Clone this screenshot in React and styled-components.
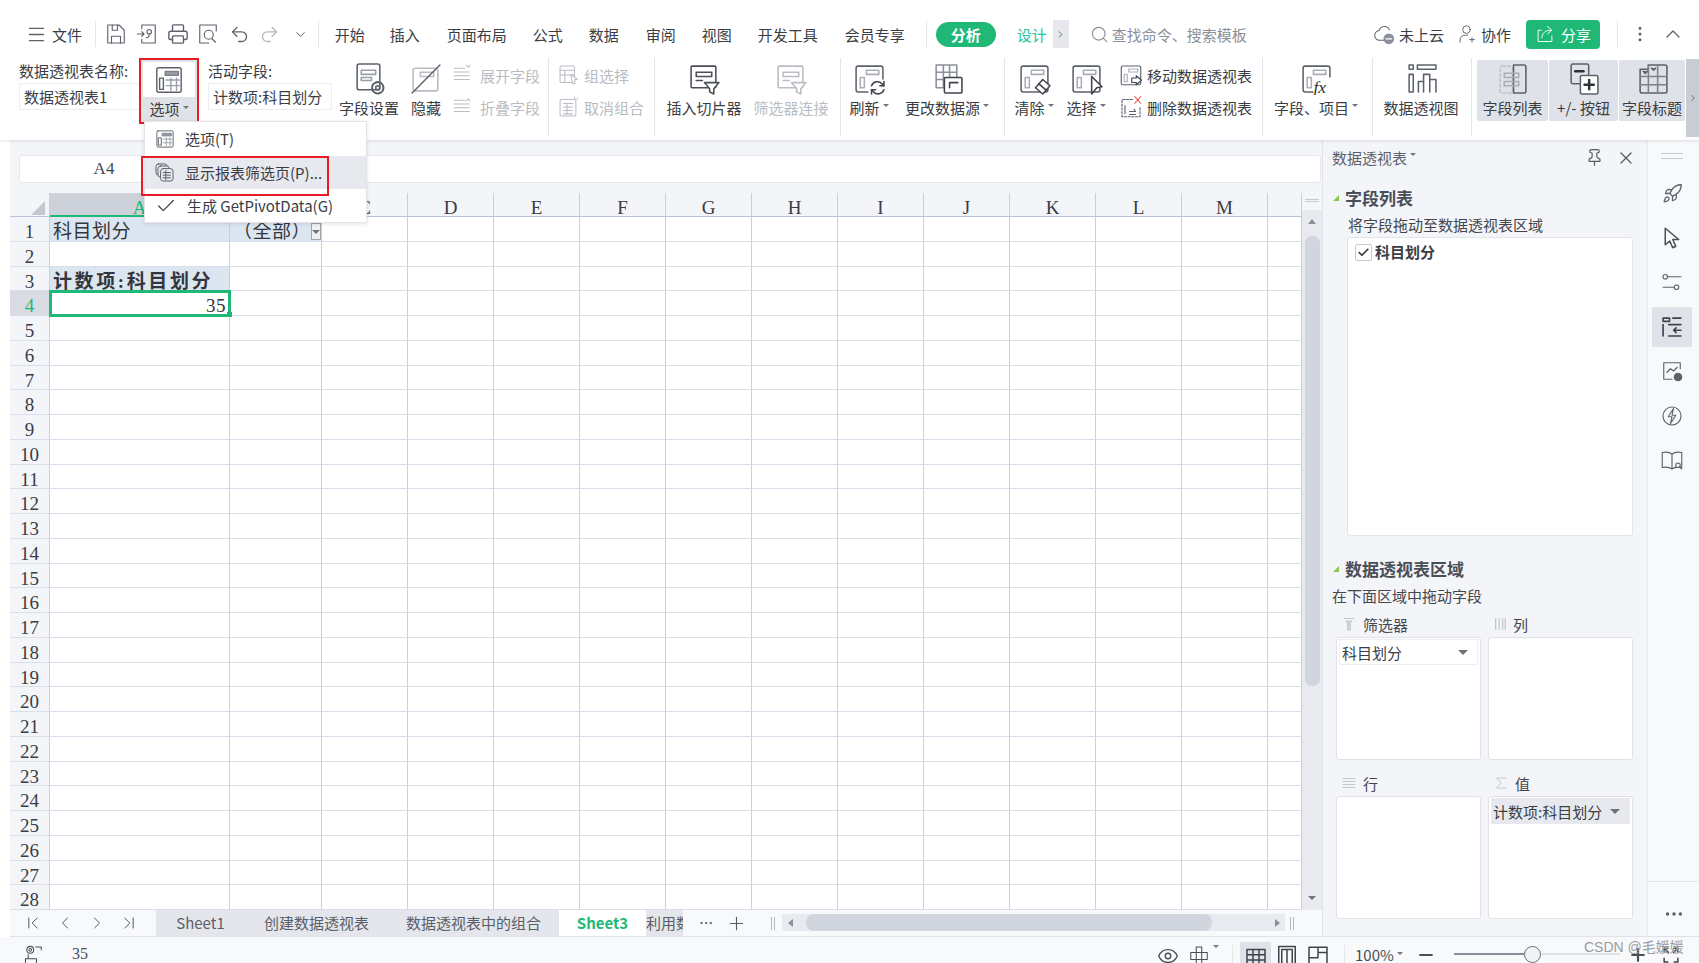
import React from "react";
import styled, { createGlobalStyle } from "styled-components";
import {
  Menu as MenuIcon, Printer, Undo2, Redo2, ChevronDown, ChevronUp, ChevronRight, ChevronLeft,
  ChevronFirst, ChevronLast, Search, Pin, X, Rocket, Eye, MoreVertical, Plus, Minus, Check, MoreHorizontal,
} from "lucide-react";

const UI = `"Noto Sans CJK SC", "Noto Sans", sans-serif`;
const SHEET = `"Liberation Serif", "Noto Sans CJK SC", serif`;
const INK = "#5c616b";
const MUTE = "#b9bcc2";

const Global = createGlobalStyle`
  html, body { margin: 0; padding: 0; background: #fff; overflow: hidden; }
  * { box-sizing: border-box; }
  body { font-family: ${UI}; font-size: 15px; color: #3a3d44; }
`;

const Page = styled.div`
  position: relative;
  width: 1699px;
  height: 963px;
  overflow: hidden;
  display: flex;
  flex-direction: column;
`;

/* ribbon */
const Ribbon = styled.header`
  height: 140px;
  flex: none;
  padding-top: 19px;
  background: #fff;
  position: relative;
  z-index: 2;
  box-shadow: 0 1px 3px rgba(40, 50, 70, 0.14);
`;
const TabRow = styled.div`
  height: 30px;
  display: flex;
  align-items: center;
  padding-left: 26px;
`;
const FileBtn = styled.div`
  width: 62px;
  display: flex;
  align-items: center;
  gap: 5px;
`;
const VLine = styled.div`
  width: 1px;
  height: ${(p) => p.$h || 26}px;
  background: #e4e6ea;
  flex: none;
  margin-left: ${(p) => p.$ml || 0}px;
  margin-right: ${(p) => p.$mr || 0}px;
`;
const Quick = styled.div`
  width: 30.7px;
  display: flex;
  justify-content: center;
  color: ${(p) => p.$c || INK};
`;
const TabLabel = styled.div`
  width: ${(p) => p.$w}px;
  text-align: center;
  white-space: nowrap;
  color: #3a3d44;
`;
const Pill = styled.div`
  width: 60px;
  height: 25px;
  margin-left: 9px;
  border-radius: 13px;
  background: #1fb877;
  color: #fff;
  font-weight: 700;
  text-align: center;
  line-height: 25px;
`;
const Design = styled.div`
  margin-left: 21px;
  width: 36px;
  color: #2cc49a;
`;
const MoreTabs = styled.div`
  width: 16px;
  height: 28px;
  background: #e6e8ed;
  display: flex;
  align-items: center;
  justify-content: center;
  color: ${INK};
`;
const SearchBox = styled.div`
  margin-left: 21px;
  display: flex;
  align-items: center;
  gap: 3px;
  color: #8b909a;
  white-space: nowrap;
`;
const RightTools = styled.div`
  margin-left: auto;
  display: flex;
  align-items: center;
  padding-right: 14px;
`;
const ToolText = styled.div`
  display: flex;
  align-items: center;
  gap: 4px;
  margin-right: ${(p) => p.$mr}px;
  white-space: nowrap;
`;
const ShareBtn = styled.div`
  width: 74px;
  height: 29px;
  border-radius: 4px;
  background: #1fb877;
  color: #fff;
  display: flex;
  align-items: center;
  justify-content: center;
  gap: 6px;
`;
const ChevronSlot = styled.div`
  margin-left: 11px;
  display: flex;
`;

const Commands = styled.div`
  margin-top: 9px;
  padding-left: 19px;
  display: flex;
  align-items: flex-start;
`;
const FieldCol = styled.div`
  width: ${(p) => p.$w}px;
  margin-left: ${(p) => p.$ml || 0}px;
  flex: none;
`;
const FieldLabel = styled.div`
  height: 25px;
  line-height: 26px;
  white-space: nowrap;
`;
const FieldInput = styled.div`
  height: 27px;
  line-height: 25px;
  padding-left: 4px;
  border: 1px solid #eceef1;
  white-space: nowrap;
  overflow: hidden;
`;
const OptionBtn = styled.div`
  width: 60px;
  height: 66px;
  margin-left: -2px;
  flex: none;
  border: 2px solid #e81c24;
  background: #dfe2e7;
  padding: 2px 2px 0;
  display: flex;
  flex-direction: column;
  align-items: center;
`;
const OptionTop = styled.div`
  width: 100%;
  height: 35px;
  background: #fff;
  display: flex;
  align-items: center;
  justify-content: center;
`;
const OptionText = styled.div`
  height: 24px;
  line-height: 24px;
  white-space: nowrap;
`;
const Big = styled.div`
  width: ${(p) => p.$w}px;
  flex: none;
  display: flex;
  flex-direction: column;
  align-items: center;
  color: ${(p) => (p.$off ? MUTE : "#3a3d44")};
  white-space: nowrap;
`;
const BigIcon = styled.div`
  height: 40px;
  display: flex;
  align-items: center;
  justify-content: center;
`;
const BigText = styled.div`
  height: 20px;
  line-height: 20px;
  display: flex;
  align-items: center;
`;
const Toggle = styled(Big)`
  height: 61px;
  margin-top: 2px;
  margin-right: 1px;
  background: #dfe2e8;
  border-radius: 2px;
  overflow: hidden;
  & > ${BigIcon} { height: 36px; }
  & > ${BigText} { margin-top: 2px; }
`;
const Caret = styled.span`
  display: inline-block;
  width: 0;
  height: 0;
  margin-left: 3px;
  margin-bottom: 6px;
  border-left: 3px solid transparent;
  border-right: 3px solid transparent;
  border-top: 3px solid #70757f;
`;
const Stack = styled.div`
  width: ${(p) => p.$w}px;
  padding-left: ${(p) => p.$pl}px;
  flex: none;
`;
const StackRow = styled.div`
  height: 32px;
  margin-top: ${(p) => (p.$first ? 1 : 0)}px;
  display: flex;
  align-items: center;
  gap: 4px;
  white-space: nowrap;
  color: ${(p) => (p.$off ? MUTE : "#3a3d44")};
`;
const RibbonSep = styled(VLine)`
  height: 78px;
`;
const Strip = styled.div`
  width: 14px;
  height: 78px;
  margin-top: 1px;
  flex: none;
  background: #c9ccd3;
  display: flex;
  align-items: center;
  justify-content: center;
  color: ${INK};
`;

/* dropdown */
const DropMenu = styled.div`
  position: absolute;
  left: 144px;
  top: 121px;
  width: 223px;
  height: 102px;
  z-index: 5;
  background: #fff;
  border: 1px solid #e2e4e8;
  box-shadow: 0 1px 4px rgba(0, 0, 0, 0.12);
`;
const DropItem = styled.div`
  position: relative;
  height: 33.5px;
  padding-left: ${(p) => (p.$hot ? 9 : 10)}px;
  display: flex;
  align-items: center;
  gap: 10px;
  white-space: nowrap;
  font-size: 15px;
  background: ${(p) => (p.$hot ? "#e7e9ee" : "transparent")};
  ${(p) => p.$hot && `
    &::after {
      content: "";
      position: absolute;
      left: -4px;
      top: 0;
      width: 184px;
      height: 36px;
      border: 2px solid #e81c24;
    }
  `}
`;

/* main */
const Main = styled.main`
  flex: 1;
  min-height: 0;
  display: flex;
  padding-left: 10px;
`;
const SheetArea = styled.section`
  width: 1312px;
  flex: none;
  display: flex;
  flex-direction: column;
  background: #f4f5f8;
`;
const FormulaBar = styled.div`
  height: 53px;
  flex: none;
  padding: 15px 1px 10px 9px;
`;
const FormulaInput = styled.div`
  height: 28px;
  background: #fff;
  border: 1px solid #e8e9ed;
  border-radius: 3px;
`;
const NameBox = styled.div`
  width: 168px;
  height: 26px;
  line-height: 26px;
  text-align: center;
  font-family: ${SHEET};
  font-size: 17px;
  color: #44474e;
`;
const GridWrap = styled.div`
  height: 717px;
  flex: none;
  display: flex;
`;
const Grid = styled.div`
  width: 1292px;
  height: 717px;
  overflow: hidden;
  display: grid;
  grid-template-columns: 40px 180px 92px repeat(11, 86px) 34px;
  grid-template-rows: 24px;
  grid-auto-rows: 24.75px;
  font-family: ${SHEET};
  font-size: 19px;
  color: #33363c;
`;
const Corner = styled.div`
  border-right: 1px solid #c7d0e0;
  border-bottom: 1px solid #b9c3d6;
  display: flex;
  align-items: flex-end;
  justify-content: flex-end;
  padding: 0 4px 1px 0;
`;
const CornerMark = styled.span`
  width: 0;
  height: 0;
  border-bottom: 14px solid #c4c8d0;
  border-left: 14px solid transparent;
`;
const ColHead = styled.div`
  text-align: center;
  line-height: 24px;
  padding-top: 3px;
  color: ${(p) => (p.$active ? "#1fb877" : "#3a3d44")};
  background: ${(p) => (p.$active ? "#cdd1d9" : "transparent")};
  border-right: 1px solid ${(p) => (p.$active ? "#cdd1d9" : "#c7d0e0")};
  border-bottom: ${(p) => (p.$active ? "2px solid #1fb877" : "1px solid #b9c3d6")};
`;
const RowHead = styled.div`
  text-align: center;
  line-height: 24px;
  padding-top: 3px;
  color: ${(p) => (p.$active ? "#1fb877" : "#3a3d44")};
  background: ${(p) => (p.$active ? "#d8dbe1" : "transparent")};
  border-right: 1px solid #c7d0e0;
  border-bottom: 1px solid #d9dfea;
`;
const Cell = styled.div`
  position: relative;
  background: ${(p) => (p.$fill ? "#dce6f1" : "#fff")};
  border-right: 1px solid #c7d0e0;
  border-bottom: 1px solid #d9dfea;
  line-height: 24px;
  padding: 3px 3px 0;
  white-space: nowrap;
  display: flex;
  justify-content: space-between;
  letter-spacing: ${(p) => (p.$bold ? 2.6 : 0.5)}px;
  font-weight: ${(p) => (p.$bold ? 700 : 400)};
`;
const SelCell = styled(Cell)`
  justify-content: flex-end;
  outline: 3px solid #1fb877;
  outline-offset: -2px;
  z-index: 1;
  &::after {
    content: "";
    position: absolute;
    right: -3px;
    bottom: -2px;
    width: 5px;
    height: 5px;
    background: #1fb877;
  }
`;
const FilterBtn = styled.span`
  width: 18px;
  height: 17px;
  margin: 3px -2px 0 0;
  background: #eef0f3;
  border: 1px solid #9fa3ab;
  display: flex;
  align-items: center;
  justify-content: center;
`;
const DownTri = styled.span`
  display: block;
  width: 0;
  height: 0;
  border-left: ${(p) => p.$s || 4}px solid transparent;
  border-right: ${(p) => p.$s || 4}px solid transparent;
  border-top: ${(p) => p.$s || 4}px solid #6e727b;
`;
const VScroll = styled.div`
  width: 20px;
  flex: none;
  display: flex;
  flex-direction: column;
`;
const Grip = styled.div`
  height: 17px;
  flex: none;
  padding: 6px 3px 0;
  & > div { height: 3px; border-top: 1px solid #c4c8d0; border-bottom: 1px solid #c4c8d0; }
`;
const VTrack = styled.div`
  flex: 1;
  background: #e8eaef;
  display: flex;
  flex-direction: column;
  align-items: center;
  padding-top: 9px;
`;
const UpTri = styled.span`
  display: block;
  width: 0;
  height: 0;
  border-left: 4px solid transparent;
  border-right: 4px solid transparent;
  border-bottom: 5px solid #8a8f99;
`;
const VThumb = styled.div`
  width: 15px;
  height: 450px;
  margin: 12px 0 0 1px;
  border-radius: 7px;
  background: #d1d5dd;
`;
const VDown = styled.div`
  margin-top: auto;
  padding-bottom: 10px;
  display: flex;
`;
const TabBar = styled.div`
  height: 27px;
  flex: none;
  display: flex;
  background: #f8f9fb;
  border-bottom: 1px solid #dfe1e6;
`;
const SheetNav = styled.div`
  width: 146px;
  flex: none;
  padding-left: 13px;
  display: flex;
  align-items: center;
  gap: 12px;
  color: #555a63;
`;
const SheetTab = styled.div`
  width: ${(p) => p.$w}px;
  flex: none;
  height: 26px;
  line-height: 25px;
  text-align: ${(p) => (p.$clip ? "left" : "center")};
  overflow: hidden;
  white-space: nowrap;
  background: ${(p) => (p.$on ? "#fff" : "#e4e6ec")};
  color: ${(p) => (p.$on ? "#1fb877" : "#5a5e67")};
  font-weight: ${(p) => (p.$on ? 700 : 400)};
`;
const TabTools = styled.div`
  width: 88px;
  flex: none;
  display: flex;
  align-items: center;
  padding-left: 15px;
  gap: 12px;
  color: #555a63;
`;
const Bars = styled.div`
  width: 4px;
  height: 13px;
  flex: none;
  margin-top: 7px;
  border-left: 1px solid #b4b8c0;
  border-right: 1px solid #b4b8c0;
`;
const HTrack = styled.div`
  width: 503px;
  height: 17px;
  margin: 4px 5px 0 7px;
  flex: none;
  background: #e8eaef;
  display: flex;
  align-items: center;
  padding: 0 5px 0 6px;
`;
const HThumb = styled.div`
  width: 406px;
  height: 17px;
  margin: 0 auto 0 13px;
  border-radius: 8px;
  background: #d1d5dd;
`;
const SideTri = styled.span`
  display: block;
  width: 0;
  height: 0;
  border-top: 4px solid transparent;
  border-bottom: 4px solid transparent;
  ${(p) => (p.$left ? "border-right" : "border-left")}: 5px solid #8a8f99;
`;

/* right panel */
const Panel = styled.aside`
  width: 325px;
  flex: none;
  background: #f4f5f8;
  border-left: 1px solid #e2e4e9;
  border-bottom: 1px solid #dfe1e6;
  padding-top: 7px;
`;
const PanelHead = styled.div`
  height: 21px;
  line-height: 21px;
  padding: 0 11px 0 9px;
  display: flex;
  align-items: center;
  color: ${INK};
`;
const HeadIcons = styled.div`
  margin-left: auto;
  display: flex;
  gap: 12px;
  color: #555a63;
`;
const SecTitle = styled.div`
  margin-top: ${(p) => p.$mt}px;
  padding-left: 10px;
  height: 24px;
  line-height: 24px;
  display: flex;
  align-items: center;
  gap: 6px;
  font-size: 17px;
  font-weight: 700;
  color: #4a4e57;
  &::before {
    content: "";
    width: 0;
    height: 0;
    border-bottom: 6px solid #8bc751;
    border-left: 6px solid transparent;
  }
`;
const SecDesc = styled.div`
  height: 20px;
  margin-top: ${(p) => p.$mt || 5}px;
  line-height: 20px;
  padding-left: ${(p) => p.$pl}px;
  color: #44474e;
`;
const FieldList = styled.div`
  width: 286px;
  height: 299px;
  margin: 2px 0 0 24px;
  background: #fff;
  border: 1px solid #e2e4e9;
  border-radius: 3px;
  padding: 3px 7px;
  display: flex;
  align-items: flex-start;
  gap: 3px;
  font-weight: 700;
`;
const CheckBox = styled.span`
  width: 17px;
  height: 17px;
  margin-top: 3px;
  flex: none;
  background: #fff;
  border: 1px solid #c6c9d0;
  border-radius: 2px;
  display: flex;
  align-items: center;
  justify-content: center;
  color: #2f3238;
`;
const Areas = styled.div`
  padding: 8px 14px 0 13px;
  display: grid;
  grid-template-columns: 145px 145px;
  grid-template-rows: 20px 126px 33px 126px;
  column-gap: 7px;
`;
const AreaLabel = styled.div`
  padding: ${(p) => (p.$low ? 13 : 0)}px 0 0 5px;
  display: flex;
  align-items: center;
  gap: 6px;
  color: #44474e;
`;
const AreaBox = styled.div`
  margin-top: 3px;
  background: #fff;
  border: 1px solid #e0e2e7;
  border-radius: 3px;
  padding: 1px 2px;
`;
const AreaItem = styled.div`
  height: 26px;
  padding: 0 9px 0 ${(p) => (p.$on ? 1 : 2)}px;
  display: flex;
  align-items: center;
  justify-content: space-between;
  white-space: nowrap;
  background: ${(p) => (p.$on ? "#e7e9ee" : "#fff")};
  border: 1px solid ${(p) => (p.$on ? "#e7e9ee" : "#eceef1")};
`;

/* side rail */
const Rail = styled.nav`
  flex: 1;
  background: #f8f9fb;
  border-left: 1px solid #e8eaee;
  border-bottom: 1px solid #dfe1e6;
  padding-right: 3px;
  display: flex;
  flex-direction: column;
  align-items: center;
  color: #5c616b;
`;
const RailGrip = styled.div`
  width: 22px;
  height: 6px;
  margin: 13px 0 14px;
  border-top: 1px solid #c8cbd2;
  border-bottom: 1px solid #c8cbd2;
`;
const RailBtn = styled.div`
  width: 40px;
  height: 40px;
  margin-bottom: 4.5px;
  display: flex;
  align-items: center;
  justify-content: center;
  border-radius: 2px;
  background: ${(p) => (p.$on ? "#dfe2e8" : "transparent")};
`;
const RailFoot = styled.div`
  margin-top: auto;
  margin-right: -3px;
  align-self: stretch;
  height: 55px;
  border-top: 1px solid #e4e6ea;
  display: flex;
  align-items: flex-start;
  justify-content: center;
  padding-top: 21px;
`;

/* status bar */
const Status = styled.footer`
  height: 26px;
  flex: none;
  display: flex;
  align-items: flex-start;
  padding-top: 8px;
  background: #f8f9fb;
  color: #4a4e57;
  font-family: ${SHEET};
  font-size: 16px;
`;
const StatusLeft = styled.div`
  width: 72px;
  padding-left: 22px;
  flex: none;
  display: flex;
  justify-content: space-between;
`;
const StatusRight = styled.div`
  margin-left: auto;
  width: 546px;
  display: flex;
  align-items: flex-start;
`;
const SCell = styled.div`
  width: ${(p) => p.$w}px;
  height: 34px;
  margin-top: ${(p) => (p.$on ? -3 : 0)}px;
  padding-top: ${(p) => (p.$on ? 3 : 0)}px;
  flex: none;
  display: flex;
  justify-content: center;
  background: ${(p) => (p.$on ? "#dfe2e8" : "transparent")};
  color: #4a4e57;
`;
const Zoom = styled.div`
  width: 46px;
  font-family: ${UI};
  font-size: 15px;
  line-height: 20px;
  white-space: nowrap;
`;
const Slider = styled.div`
  width: 166px;
  height: 18px;
  margin-left: 3px;
  flex: none;
  display: flex;
  align-items: center;
`;
const Seg = styled.div`
  height: 2px;
  flex: ${(p) => (p.$on ? "0 0 70px" : "1")};
  background: ${(p) => (p.$on ? "#8a8f99" : "#dfe1e6")};
`;
const Knob = styled.div`
  width: 17px;
  height: 17px;
  flex: none;
  border-radius: 50%;
  background: #f1f2f4;
  border: 1.5px solid #6a6e77;
`;
const Watermark = styled.div`
  position: absolute;
  left: 1584px;
  top: 936px;
  z-index: 6;
  font-family: "Liberation Sans", "Noto Sans CJK SC", sans-serif;
  font-size: 14px;
  color: #9a9ca2;
  white-space: nowrap;
`;

/* drawings */
const Svg = ({ s = 32, c = INK, w = 1.5, children }) => (
  <svg width={s} height={s} viewBox="0 0 32 32" fill="none" stroke={c} strokeWidth={w} strokeLinejoin="round" strokeLinecap="round">
    {children}
  </svg>
);
const Pivot = ({ c = INK, light = "#a9adb5" }) => (
  <>
    <rect x="3" y="4" width="26" height="25" rx="2" stroke={c} />
    <rect x="13" y="8" width="12" height="4" stroke={light} />
    <rect x="7" y="15" width="4" height="10" stroke={light} />
  </>
);
const OptionIcon = ({ s }) => (
  <Svg s={s}>
    <rect x="3" y="3" width="26" height="26" rx="2" />
    <rect x="12" y="7" width="14" height="4" fill="#9aa0aa" stroke="#7c818b" />
    <rect x="6" y="14" width="4" height="12" />
    <path d="M13 16h14M13 22h14M18 14v13M24 14v13" stroke="#9aa0aa" />
  </Svg>
);
const GearIcon = () => (
  <Svg s={33}>
    <rect x="4" y="2" width="22" height="25" rx="2" />
    <path d="M8 8h14v4H8zM8 15h10v3H8z" stroke="#9aa0aa" />
    <circle cx="24" cy="25" r="2" />
    <circle cx="24" cy="25" r="5.500" strokeDasharray="3 1.5" strokeWidth="2" />
  </Svg>
);
const HideIcon = () => (
  <Svg s={33} c={MUTE}>
    <rect x="3" y="6" width="24" height="22" rx="2" />
    <path d="M10 10h13v4H10z" />
    <path d="M2 30 29 3" stroke="#5c616b" strokeWidth="1.4" />
  </Svg>
);
const ExpandIcon = ({ up }) => (
  <Svg s={24} c={MUTE}>
    <path d="M3 7h14M3 12h20M3 17h20M3 22h20" />
    <path d={up ? "M19 8l2.500-3 2.500 3" : "M19 3l2.500 3 2.500-3"} />
  </Svg>
);
const GroupIcon = () => (
  <Svg s={22} c={MUTE}>
    <rect x="3" y="3" width="21" height="24" rx="2" />
    <path d="M3 9h21M3 16h21M10 9v18" />
    <path d="M19 15l9 7-4 1 1 5-3 1-2-5z" fill="#fff" />
  </Svg>
);
const UngroupIcon = () => (
  <Svg s={22} c={MUTE}>
    <rect x="3" y="5" width="23" height="24" rx="2" />
    <path d="M8 11h13M8 16h13M8 21h13M8 26h13M13 11v15" />
    <path d="M24 2v2M28 3v2" />
  </Svg>
);
const SlicerIcon = ({ c = "#4a4e57" }) => (
  <Svg s={33} c={c}>
    <rect x="3" y="4" width="24" height="21" rx="1" />
    <path d="M8 10h15v4H8zM8 18h6" />
    <path d="M16 20h14l-5 6v5l-4-2v-3z" fill="#fff" />
  </Svg>
);
const RefreshIcon = () => (
  <Svg s={33}>
    <Pivot />
    <rect x="15" y="17" width="17" height="15" fill="#fff" stroke="none" />
    <path d="M18 23a6 6 0 0 1 10-2l2 2M30 27a6 6 0 0 1-10 2l-2-2" stroke="#3f434b" />
    <path d="M30 19v4h-4M18 31v-4h4" stroke="#3f434b" />
  </Svg>
);
const SourceIcon = () => (
  <Svg s={33}>
    <path d="M5 3h20v22H5zM5 10h20M5 17h20M12 3v22M18 3v22" stroke="#8b909a" />
    <rect x="13" y="15" width="17" height="15" rx="1" fill="#fff" stroke="#3f434b" />
    <path d="M18 25v-5h8" stroke="#3f434b" />
  </Svg>
);
const ClearIcon = () => (
  <Svg s={33}>
    <Pivot />
    <path d="M24 17l7 6-7 8-7-6z" fill="#fff" stroke="#3f434b" />
    <path d="M20 21l7 6" stroke="#3f434b" />
  </Svg>
);
const SelectIcon = () => (
  <Svg s={33}>
    <Pivot />
    <path d="M21 14l10 10-5 1-5 6z" fill="#fff" stroke="#3f434b" />
  </Svg>
);
const MoveIcon = () => (
  <Svg s={24}>
    <Pivot />
    <path d="M17 20h6v-3l7 6-7 6v-3h-6z" fill="#fff" stroke="#3f434b" />
  </Svg>
);
const DeleteIcon = () => (
  <Svg s={24}>
    <path d="M18 6H4v23h24V17" strokeDasharray="3 2" />
    <path d="M8 14v11M14 22h8l-2-3M22 26h-8" />
    <path d="M21 2l8 9M29 2l-8 9" stroke="#e5534b" />
  </Svg>
);
const FxIcon = () => (
  <Svg s={33}>
    <Pivot />
    <rect x="13" y="15" width="19" height="17" fill="#fff" stroke="none" />
    <text x="13" y="30" fontFamily="Liberation Serif" fontStyle="italic" fontSize="17" fill="#2f3238" stroke="none">fx</text>
  </Svg>
);
const ChartIcon = () => (
  <Svg s={33}>
    <rect x="4" y="3" width="4" height="4" />
    <rect x="12" y="3" width="18" height="4" />
    <rect x="4" y="12" width="4" height="17" />
    <path d="M13 29V19h5v10M18 29V12h6v17M24 29V17h6v12" />
  </Svg>
);
const FieldListIcon = () => (
  <Svg s={33}>
    <rect x="4" y="4" width="12" height="26" rx="2" stroke="#c0c3c9" strokeDasharray="3 2" />
    <path d="M17 3h10a2 2 0 0 1 2 2v23a2 2 0 0 1-2 2H17z" />
    <path d="M8 11h14v4H8zM8 19h14v4H8z" stroke="#a9adb5" />
  </Svg>
);
const PlusMinusIcon = () => (
  <Svg s={33}>
    <rect x="4" y="2" width="17" height="19" rx="1.5" />
    <path d="M8 9h8" strokeWidth="2.4" stroke="#2f3238" />
    <rect x="13" y="13" width="17" height="18" rx="1.5" fill="#fff" />
    <path d="M17 22h9M21.500 17.500v9" strokeWidth="2.4" stroke="#2f3238" />
  </Svg>
);
const HeaderIcon = () => (
  <Svg s={33}>
    <path d="M4 7h8v-4h16a2 2 0 0 1 2 2v23a2 2 0 0 1-2 2H6a2 2 0 0 1-2-2z" />
    <path d="M4 14h26M4 22h26M12 3v27M21 3v27" stroke="#7c818b" />
    <path d="M7 9l2 2 2-2M15 6l2 2 2-2" fill="#3f434b" />
  </Svg>
);
const SaveIcon = () => (
  <Svg s={24}>
    <path d="M5 4h15l7 7v17H5z" />
    <path d="M11 4v7h7V4M10 28v-9h12v9" />
  </Svg>
);
const OutputIcon = () => (
  <Svg s={24}>
    <path d="M9 9V4h18v24H9v-5" />
    <path d="M3 16h9l-3-3M12 16l-3 3" />
    <circle cx="19" cy="13" r="3" />
    <path d="M19 16c0 4-2 5-4 5" />
  </Svg>
);
const PreviewIcon = () => (
  <Svg s={24}>
    <path d="M27 12V4H5v24h12" />
    <circle cx="17" cy="17" r="6" />
    <path d="M21 22l5 5" />
  </Svg>
);
const CloudIcon = () => (
  <Svg s={22}>
    <path d="M18 25H10a7 7 0 0 1-1-14 8 8 0 0 1 15-1" />
    <circle cx="23" cy="23" r="7" fill="#8b909a" stroke="#8b909a" />
    <path d="M19 23h8" stroke="#fff" strokeWidth="2" />
  </Svg>
);
const PeopleIcon = () => (
  <Svg s={20}>
    <circle cx="15" cy="9" r="6" />
    <path d="M5 29v-5a8 8 0 0 1 8-6h4M24 22v7M20 25h8" />
  </Svg>
);
const ShareIcon = () => (
  <Svg s={20} c="#fff">
    <path d="M10 10H5v18h22v-9" />
    <path d="M11 22c0-8 6-12 14-12M20 4l7 6-7 6" />
  </Svg>
);
const FilterSmall = () => (
  <Svg s={16} c="#c4c7cd" w={2}>
    <path d="M6 5h20M10 10h12l-3 4v14h-6V14z" fill="#d4d6db" />
  </Svg>
);
const ColsSmall = () => (
  <Svg s={14} c="#c4c7cd" w={3}>
    <path d="M6 4v24M14 4v24M22 4v24M28 4v24" />
  </Svg>
);
const RowsSmall = () => (
  <Svg s={16} c="#c4c7cd" w={2.4}>
    <path d="M4 7h24M4 13h24M4 19h24M4 25h24" />
  </Svg>
);
const SumSmall = () => (
  <Svg s={16} c="#c4c7cd" w={2}>
    <path d="M26 6H7l9 10-9 10h19" />
  </Svg>
);
const MenuShow = () => (
  <Svg s={21}>
    <rect x="3" y="3" width="17" height="17" rx="4" />
    <rect x="6" y="6" width="17" height="17" rx="4" fill="#e7e9ee" />
    <rect x="10" y="10" width="19" height="19" rx="4" fill="#e7e9ee" />
    <path d="M14 16h11M14 20h11M14 24h11M18 13v14" />
  </Svg>
);
const RailCursor = () => (
  <Svg s={24} c="#4a4e57" w={2}>
    <path d="M7 3v22l6-5 4 9 4-2-4-9h8z" />
  </Svg>
);
const RailSliders = () => (
  <Svg s={24}>
    <circle cx="7" cy="9" r="3" />
    <path d="M10 9h18M4 23h14" />
    <circle cx="22" cy="23" r="3" />
  </Svg>
);
const RailPivot = () => (
  <Svg s={26} c="#3f434b" w={2}>
    <path d="M5 5h8v4H5zM17 5h10M5 13v14M12 13h15" />
    <path d="M27 20h-9l3-3M18 20l3 3M12 27h15" />
  </Svg>
);
const RailChart = () => (
  <Svg s={24}>
    <path d="M27 13V5H5v22h11" />
    <path d="M9 18l5-5 4 3 5-5" />
    <circle cx="24" cy="24" r="5" fill="#5c616b" />
  </Svg>
);
const RailBolt = () => (
  <Svg s={24}>
    <circle cx="16" cy="16" r="12" />
    <path d="M18 6l-7 11h5l-2 9 7-11h-5z" />
  </Svg>
);
const RailBook = () => (
  <Svg s={24}>
    <path d="M16 8C12 5 8 5 3 6v20c5-1 9-1 13 2 4-3 8-3 13-2V6c-5-1-9-1-13 2zM16 8v20" />
    <circle cx="24" cy="23" r="3" fill="#f8f9fb" />
    <path d="M26 25l3 3" />
  </Svg>
);
const Lens = () => (
  <Svg s={22} c="#4a4e57">
    <path d="M12 3v8H4v10h8v8h8v-8h8V11h-8V3z" />
    <path d="M12 11v10M20 11v10M12 21h8M12 11h8" />
  </Svg>
);
const ViewGrid = () => (
  <Svg s={24} c="#3f434b" w={2}>
    <path d="M4 6h24v22H4zM4 13h24M4 20h24M12 6v22M20 6v22" />
  </Svg>
);
const ViewPage = () => (
  <Svg s={24} c="#3f434b" w={2}>
    <path d="M5 2h22v26H5zM9 6h14v22H9zM16 6v22" />
  </Svg>
);
const ViewBreak = () => (
  <Svg s={24} c="#3f434b" w={2}>
    <path d="M4 3h24v26H4zM4 17h12V3M16 10h12" />
  </Svg>
);
const TripodIcon = () => (
  <Svg s={22} c="#4a4e57">
    <circle cx="12" cy="7" r="5" />
    <circle cx="12" cy="7" r="2" />
    <path d="M20 3h8v4M5 20h16v8H5zM9 14v6" />
  </Svg>
);
const FullScreen = () => (
  <Svg s={20} c="#3f434b" w={2.4}>
    <path d="M5 11V5h6M27 11V5h-6M5 21v6h6M27 21v6h-6M5 5l7 7M27 5l-7 7" />
  </Svg>
);

const COLS = ["A", "B", "C", "D", "E", "F", "G", "H", "I", "J", "K", "L", "M", ""];
const ROWS = Array.from({ length: 28 }, (_, i) => i + 1);

const SheetCell = ({ row, col }) => {
  if (row === 1 && col === "A") return <Cell $fill>科目划分</Cell>;
  if (row === 1 && col === "B")
    return (
      <Cell $fill>
        （全部）
        <FilterBtn><DownTri /></FilterBtn>
      </Cell>
    );
  if (row === 3 && col === "A") return <Cell $fill $bold>计数项:科目划分</Cell>;
  if (row === 4 && col === "A") return <SelCell>35</SelCell>;
  return <Cell />;
};

const BigButton = ({ w, icon, label, caret, off }) => (
  <Big $w={w} $off={off}>
    <BigIcon>{icon}</BigIcon>
    <BigText>{label}{caret && <Caret />}</BigText>
  </Big>
);

const ToggleButton = ({ w, icon, label }) => (
  <Toggle $w={w}>
    <BigIcon>{icon}</BigIcon>
    <BigText>{label}</BigText>
  </Toggle>
);

export default function App() {
  return (
    <Page>
      <Global />
      <Ribbon>
        <TabRow>
          <FileBtn><MenuIcon size={21} strokeWidth={1.5} color={INK} />文件</FileBtn>
          <VLine $ml={7} $mr={5} />
          <Quick><SaveIcon /></Quick>
          <Quick><OutputIcon /></Quick>
          <Quick><Printer size={22} strokeWidth={1.5} /></Quick>
          <Quick><PreviewIcon /></Quick>
          <Quick><Undo2 size={21} strokeWidth={1.5} /></Quick>
          <Quick $c="#b5b8be"><Redo2 size={21} strokeWidth={1.5} /></Quick>
          <Quick><ChevronDown size={15} strokeWidth={1.6} /></Quick>
          <VLine $ml={2} $mr={3} />
          <TabLabel $w={56}>开始</TabLabel>
          <TabLabel $w={54}>插入</TabLabel>
          <TabLabel $w={90}>页面布局</TabLabel>
          <TabLabel $w={52}>公式</TabLabel>
          <TabLabel $w={60}>数据</TabLabel>
          <TabLabel $w={54}>审阅</TabLabel>
          <TabLabel $w={58}>视图</TabLabel>
          <TabLabel $w={84}>开发工具</TabLabel>
          <TabLabel $w={90}>会员专享</TabLabel>
          <VLine $ml={6} />
          <Pill>分析</Pill>
          <Design>设计</Design>
          <MoreTabs><ChevronRight size={11} strokeWidth={2} /></MoreTabs>
          <SearchBox><Search size={19} strokeWidth={1.5} />查找命令、搜索模板</SearchBox>
          <RightTools>
            <ToolText $mr={13}><CloudIcon />未上云</ToolText>
            <ToolText $mr={15}><PeopleIcon />协作</ToolText>
            <ShareBtn><ShareIcon />分享</ShareBtn>
            <VLine $ml={17} $mr={12} />
            <MoreVertical size={20} strokeWidth={1.6} color={INK} />
            <ChevronSlot><ChevronUp size={24} strokeWidth={1.3} color={INK} /></ChevronSlot>
          </RightTools>
        </TabRow>
        <Commands>
          <FieldCol $w={122}>
            <FieldLabel>数据透视表名称:</FieldLabel>
            <FieldInput>数据透视表1</FieldInput>
          </FieldCol>
          <OptionBtn>
            <OptionTop><OptionIcon s={30} /></OptionTop>
            <OptionText>选项<Caret /></OptionText>
          </OptionBtn>
          <FieldCol $w={124} $ml={9}>
            <FieldLabel>活动字段:</FieldLabel>
            <FieldInput>计数项:科目划分</FieldInput>
          </FieldCol>
          <BigButton w={74} icon={<GearIcon />} label="字段设置" />
          <BigButton w={40} icon={<HideIcon />} label="隐藏" />
          <Stack $w={102} $pl={6}>
            <StackRow $first $off><ExpandIcon />展开字段</StackRow>
            <StackRow $off><ExpandIcon up />折叠字段</StackRow>
          </Stack>
          <RibbonSep />
          <Stack $w={105} $pl={9}>
            <StackRow $first $off><GroupIcon />组选择</StackRow>
            <StackRow $off><UngroupIcon />取消组合</StackRow>
          </Stack>
          <RibbonSep />
          <BigButton w={98} icon={<SlicerIcon />} label="插入切片器" />
          <BigButton w={76} off icon={<SlicerIcon c={MUTE} />} label="筛选器连接" />
          <RibbonSep $ml={11} />
          <BigButton w={56} icon={<RefreshIcon />} label="刷新" caret />
          <BigButton w={100} icon={<SourceIcon />} label="更改数据源" caret />
          <RibbonSep $ml={7} />
          <BigButton w={58} icon={<ClearIcon />} label="清除" caret />
          <BigButton w={46} icon={<SelectIcon />} label="选择" caret />
          <Stack $w={153} $pl={10}>
            <StackRow $first><MoveIcon />移动数据透视表</StackRow>
            <StackRow><DeleteIcon />删除数据透视表</StackRow>
          </Stack>
          <RibbonSep />
          <BigButton w={106} icon={<FxIcon />} label="字段、项目" caret />
          <RibbonSep $ml={3} />
          <BigButton w={96} icon={<ChartIcon />} label="数据透视图" />
          <RibbonSep $ml={2} $mr={5} />
          <ToggleButton w={71} icon={<FieldListIcon />} label="字段列表" />
          <ToggleButton w={69} icon={<PlusMinusIcon />} label="+/- 按钮" />
          <ToggleButton w={66} icon={<HeaderIcon />} label="字段标题" />
          <Strip><ChevronRight size={10} strokeWidth={2} /></Strip>
        </Commands>
      </Ribbon>

      <DropMenu>
        <DropItem><OptionIcon s={20} />选项(T)</DropItem>
        <DropItem $hot><MenuShow />显示报表筛选页(P)...</DropItem>
        <DropItem><Check size={22} strokeWidth={1.4} color="#3f434b" />生成 GetPivotData(G)</DropItem>
      </DropMenu>

      <Main>
        <SheetArea>
          <FormulaBar>
            <FormulaInput><NameBox>A4</NameBox></FormulaInput>
          </FormulaBar>
          <GridWrap>
            <Grid>
              <Corner><CornerMark /></Corner>
              {COLS.map((c) => (
                <ColHead key={c || "end"} $active={c === "A"}>{c}</ColHead>
              ))}
              {ROWS.map((r) => (
                <React.Fragment key={r}>
                  <RowHead $active={r === 4}>{r}</RowHead>
                  {COLS.map((c) => (
                    <SheetCell key={c || "end"} row={r} col={c} />
                  ))}
                </React.Fragment>
              ))}
            </Grid>
            <VScroll>
              <Grip><div /></Grip>
              <VTrack>
                <UpTri />
                <VThumb />
                <VDown><DownTri /></VDown>
              </VTrack>
            </VScroll>
          </GridWrap>
          <TabBar>
            <SheetNav>
              <ChevronFirst size={20} strokeWidth={1.2} />
              <ChevronLeft size={20} strokeWidth={1.2} />
              <ChevronRight size={20} strokeWidth={1.2} />
              <ChevronLast size={20} strokeWidth={1.2} />
            </SheetNav>
            <SheetTab $w={89}>Sheet1</SheetTab>
            <SheetTab $w={143}>创建数据透视表</SheetTab>
            <SheetTab $w={171}>数据透视表中的组合</SheetTab>
            <SheetTab $w={87} $on>Sheet3</SheetTab>
            <SheetTab $w={37} $clip>利用数</SheetTab>
            <TabTools>
              <MoreHorizontal size={16} strokeWidth={1.5} />
              <Plus size={21} strokeWidth={1.3} />
            </TabTools>
            <Bars />
            <HTrack>
              <SideTri $left />
              <HThumb />
              <SideTri />
            </HTrack>
            <Bars />
          </TabBar>
        </SheetArea>

        <Panel>
          <PanelHead>
            数据透视表<Caret />
            <HeadIcons>
              <Pin size={19} strokeWidth={1.5} />
              <X size={20} strokeWidth={1.5} />
            </HeadIcons>
          </PanelHead>
          <SecTitle $mt={18}>字段列表</SecTitle>
          <SecDesc $pl={25}>将字段拖动至数据透视表区域</SecDesc>
          <FieldList>
            <CheckBox><Check size={13} strokeWidth={3} /></CheckBox>
            科目划分
          </FieldList>
          <SecTitle $mt={21}>数据透视表区域</SecTitle>
          <SecDesc $pl={9} $mt={5}>在下面区域中拖动字段</SecDesc>
          <Areas>
            <AreaLabel><FilterSmall />筛选器</AreaLabel>
            <AreaLabel><ColsSmall />列</AreaLabel>
            <AreaBox>
              <AreaItem>科目划分<DownTri $s={5} /></AreaItem>
            </AreaBox>
            <AreaBox />
            <AreaLabel $low><RowsSmall />行</AreaLabel>
            <AreaLabel $low><SumSmall />值</AreaLabel>
            <AreaBox />
            <AreaBox>
              <AreaItem $on>计数项:科目划分<DownTri $s={5} /></AreaItem>
            </AreaBox>
          </Areas>
        </Panel>

        <Rail>
          <RailGrip />
          <RailBtn><Rocket size={21} strokeWidth={1.5} /></RailBtn>
          <RailBtn><RailCursor /></RailBtn>
          <RailBtn><RailSliders /></RailBtn>
          <RailBtn $on><RailPivot /></RailBtn>
          <RailBtn><RailChart /></RailBtn>
          <RailBtn><RailBolt /></RailBtn>
          <RailBtn><RailBook /></RailBtn>
          <RailFoot><MoreHorizontal size={22} strokeWidth={1.8} /></RailFoot>
        </Rail>
      </Main>

      <Status>
        <StatusLeft><TripodIcon /></StatusLeft>
        <span>35</span>
        <StatusRight>
          <SCell $w={30}><Eye size={22} strokeWidth={1.5} /></SCell>
          <SCell $w={41}><Lens /><Caret /></SCell>
          <VLine $h={20} $ml={8} $mr={7} />
          <SCell $w={31} $on><ViewGrid /></SCell>
          <SCell $w={31}><ViewPage /></SCell>
          <SCell $w={32}><ViewBreak /></SCell>
          <VLine $h={20} $ml={10} $mr={10} />
          <Zoom>100%<Caret /></Zoom>
          <SCell $w={50}><Minus size={20} strokeWidth={2.6} /></SCell>
          <Slider><Seg $on /><Knob /><Seg /></Slider>
          <SCell $w={36}><Plus size={20} strokeWidth={2.6} /></SCell>
          <SCell $w={30}><FullScreen /></SCell>
        </StatusRight>
      </Status>
      <Watermark>CSDN @毛媛媛</Watermark>
    </Page>
  );
}
